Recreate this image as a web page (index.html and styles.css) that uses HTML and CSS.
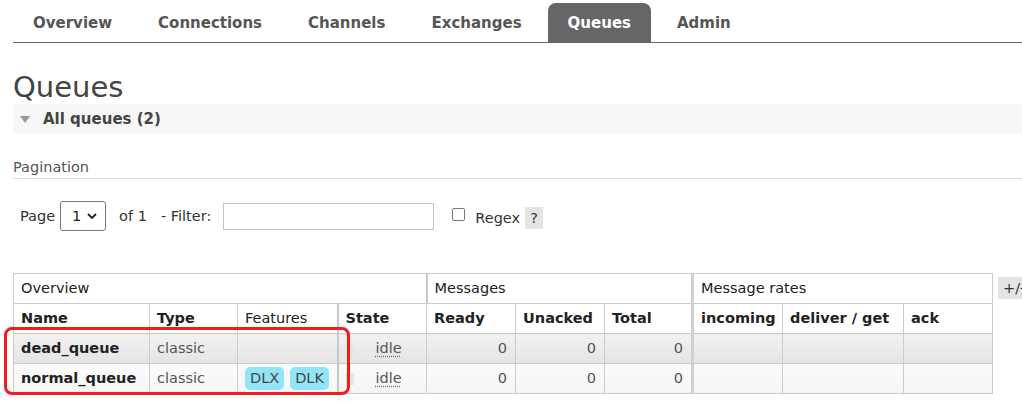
FILE: index.html
```html
<!DOCTYPE html>
<html lang="en">
<head>
<meta charset="utf-8">
<title>Queues</title>
<link rel="stylesheet" href="styles.css">
</head>
<body>
<div class="page">
  <nav class="menu">
    <a class="tab">Overview</a>
    <a class="tab">Connections</a>
    <a class="tab">Channels</a>
    <a class="tab">Exchanges</a>
    <a class="tab active">Queues</a>
    <a class="tab">Admin</a>
  </nav>
  <h1 class="title">Queues</h1>
  <section class="section">
    <h2 class="section-head"><span class="tri"></span>All queues (2)</h2>
    <h3 class="sub">Pagination</h3>
    <div class="pager">
      <span>Page</span>
      <div class="select"><span>1</span><svg class="chev" width="10" height="6" viewBox="0 0 10 6"><path d="M1 1l4 4 4-4" fill="none" stroke="#222" stroke-width="1.8"/></svg></div>
      <span class="of">of 1</span>
      <span class="flabel">- Filter:</span>
      <input class="filter" type="text">
      <span class="check"></span>
      <span class="regex">Regex</span>
      <span class="help">?</span>
    </div>
    <div class="table-wrap">
      <table class="list">
        <colgroup>
          <col class="w136"><col class="w88"><col class="w100"><col class="w89"><col class="w89"><col class="w89"><col class="w88"><col class="w90"><col class="w121"><col class="w89">
        </colgroup>
        <thead>
          <tr class="group">
            <th colspan="4">Overview</th>
            <th colspan="3" class="sep">Messages</th>
            <th colspan="3" class="sep2">Message rates</th>
          </tr>
          <tr class="heads">
            <th>Name</th>
            <th>Type</th>
            <th class="plain">Features</th>
            <th class="sep">State</th>
            <th>Ready</th>
            <th>Unacked</th>
            <th>Total</th>
            <th class="sep2">incoming</th>
            <th>deliver / get</th>
            <th>ack</th>
          </tr>
        </thead>
        <tbody>
          <tr class="alt1">
            <td class="name">dead_queue</td>
            <td>classic</td>
            <td></td>
            <td class="sep state"><span class="sbox"></span><abbr class="idle">idle</abbr></td>
            <td class="num">0</td>
            <td class="num">0</td>
            <td class="num">0</td>
            <td class="sep2"></td>
            <td></td>
            <td></td>
          </tr>
          <tr class="alt2">
            <td class="name">normal_queue</td>
            <td>classic</td>
            <td><span class="badge">DLX</span><span class="badge">DLK</span></td>
            <td class="sep state"><span class="sbox"></span><abbr class="idle">idle</abbr></td>
            <td class="num">0</td>
            <td class="num">0</td>
            <td class="num">0</td>
            <td class="sep2"></td>
            <td></td>
            <td></td>
          </tr>
        </tbody>
      </table>
      <span class="plusminus">+/-</span>
    </div>
  </section>
</div>
<div class="annot"></div>
</body>
</html>
```

FILE: styles.css
```css
* { box-sizing: border-box; }
html, body { margin: 0; padding: 0; overflow: hidden; background: #fff; }
body {
  font-family: "DejaVu Sans", Verdana, sans-serif;
  font-size: 14.5px;
  color: #444;
  width: 1022px;
}
.page { padding-left: 13px; }

.menu {
  display: flex;
  padding-top: 3px;
  border-bottom: 1px solid #666;
}
.tab {
  display: block;
  padding: 1px 20px 0;
  height: 39px;
  line-height: 38px;
  margin-right: 6px;
  font-weight: bold;
  font-size: 15px;
  color: #555;
  border-radius: 8px 8px 0 0;
}
.tab.active { background: #666; color: #fff; }

.title {
  margin: 27px 0 0;
  font-size: 29px;
  font-weight: normal;
  line-height: 34px;
  color: #444;
}

.section-head {
  margin: 0;
  height: 30px;
  background: #f7f7f7;
  display: flex;
  align-items: center;
  font-size: 15px;
  font-weight: bold;
  color: #444;
  padding-left: 7px;
}
.tri {
  width: 0; height: 0;
  border-left: 5.5px solid transparent;
  border-right: 5.5px solid transparent;
  border-top: 7px solid #999;
  margin-right: 13px;
}

.sub {
  margin: 24px 0 0;
  font-size: 14.5px;
  font-weight: normal;
  color: #555;
  line-height: 18px;
  padding-bottom: 2px;
  border-bottom: 1px solid #ddd;
}

.pager {
  display: flex;
  align-items: center;
  margin-top: 22px;
  padding-left: 7px;
  height: 30px;
  color: #333;
}
.select {
  margin-left: 5px;
  width: 46px;
  height: 30px;
  border: 1px solid #767676;
  border-radius: 3px;
  display: flex;
  align-items: center;
  padding-left: 11px;
  color: #222;
}
.chev { margin-left: 6px; }
.of { margin-left: 13px; }
.flabel { margin-left: 14px; }
.filter {
  margin-left: 12px;
  width: 211px;
  height: 27px;
  border: 1px solid #c4c4c4;
  padding: 0;
}
.check {
  margin-left: 18px;
  width: 13px;
  height: 13px;
  border: 1px solid #767676;
  border-radius: 2px;
  margin-top: -3px;
}
.regex { margin-left: 10px; margin-top: 3px; }
.help {
  margin-left: 5px;
  margin-top: 3px;
  background: #e4e4e4;
  width: 18px;
  height: 22px;
  line-height: 22px;
  text-align: center;
  color: #333;
}

.table-wrap {
  display: flex;
  align-items: flex-start;
  margin-top: 42px;
}
.list {
  border-collapse: collapse;
  table-layout: fixed;
  width: 979px;
  flex: none;
}
.w136 { width: 136px; } .w88 { width: 88px; } .w100 { width: 100px; }
.w89 { width: 89px; } .w90 { width: 90px; } .w121 { width: 121px; }
.list th, .list td {
  border: 1px solid #ccc;
  padding: 5px 7px;
  line-height: 19px;
  text-align: left;
  white-space: nowrap;
  overflow: hidden;
}
.list .sep { border-left: 2px solid #c8c8c8; }
.list .sep2 { border-left: 3px solid #d0d0d0; }
.group th { font-weight: normal; color: #222; }
.heads th { font-weight: bold; color: #222; }
.heads th.plain { font-weight: normal; }
.list td { color: #555; }
.list td.name { font-weight: bold; color: #222; }
.list td.num { text-align: right; padding-right: 8px; }
.alt1 td { background: linear-gradient(#f1f1f1, #e4e4e4); }
.alt2 td { background: linear-gradient(#fbfbfb, #f5f5f5); }
.state { padding-left: 9px; }
.sbox {
  display: inline-block;
  width: 8px;
  height: 12px;
  background: #e6e6e6;
  vertical-align: middle;
  margin-right: 22px;
}
.idle {
  color: #555;
  text-decoration: underline dotted #777;
  text-underline-offset: 3px;
}
.badge {
  display: inline-block;
  background: #94e4f7;
  border-radius: 5px;
  padding: 2px 5px;
  line-height: 19px;
  margin: -2px 6px -2px 0;
  color: #444;
}
.plusminus {
  margin-left: 5px;
  margin-top: 4px;
  background: #e4e4e4;
  padding: 1px 3px 1px 5px;
  line-height: 20px;
  color: #333;
  white-space: nowrap;
}

.annot {
  position: absolute;
  left: 4px;
  top: 327px;
  width: 346px;
  height: 68px;
  border: 3px solid #f21c1c;
  border-radius: 8px;
  pointer-events: none;
}
```
